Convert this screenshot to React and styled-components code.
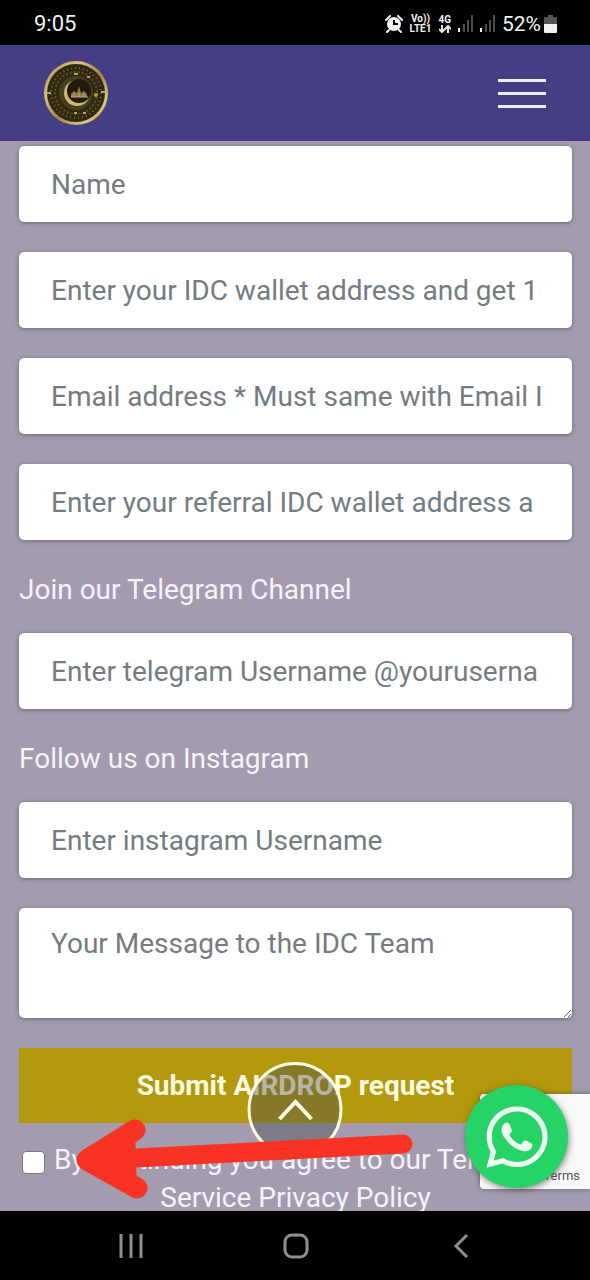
import React from 'react';
import styled, { createGlobalStyle } from 'styled-components';
import { FaWhatsapp } from 'react-icons/fa';

const App = () => {
    return (
        <>
            <GlobalStyle />
            <StScreen>
                <StStatusBar>
                    <StClock>9:05</StClock>
                    <StStatusIcons>
                        <AlarmIcon />
                        <StTiny>
                            <span>Vo))</span>
                            <span>LTE1</span>
                        </StTiny>
                        <StTiny>
                            <span>4G</span>
                            <DataArrows />
                        </StTiny>
                        <SignalIcon />
                        <SignalIcon />
                        <StBattery>
                            52%
                            <BatteryIcon />
                        </StBattery>
                    </StStatusIcons>
                </StStatusBar>

                <StHeader>
                    <CoinLogo />
                    <StMenuButton type='button' aria-label='Menu'>
                        <span />
                        <span />
                        <span />
                    </StMenuButton>
                </StHeader>

                <StMain>
                    <StForm>
                        <StInput type='text' aria-label='Name' placeholder='Name' />
                        <StInput type='text' aria-label='IDC wallet address' placeholder='Enter your IDC wallet address and get 1' />
                        <StInput type='email' aria-label='Email address' placeholder='Email address * Must same with Email I' />
                        <StInput type='text' aria-label='Referral wallet address' placeholder='Enter your referral IDC wallet address a' />
                        <StField>
                            <label htmlFor='telegram'>Join our Telegram Channel</label>
                            <StInput id='telegram' type='text' placeholder='Enter telegram Username @youruserna' />
                        </StField>
                        <StField>
                            <label htmlFor='instagram'>Follow us on Instagram</label>
                            <StInput id='instagram' type='text' placeholder='Enter instagram Username' />
                        </StField>
                        <StTextarea aria-label='Message' placeholder='Your Message to the IDC Team' />
                        <StSubmit type='submit'>Submit AIRDROP request</StSubmit>
                    </StForm>
                    <StTerms>
                        <StAgree>
                            <StCheckbox id='agree' type='checkbox' />
                            <label htmlFor='agree'>By continuing you agree to our Terms of</label>
                        </StAgree>
                        <p>
                            <a href='#terms'>Service</a> <a href='#privacy'>Privacy Policy</a>
                        </p>
                    </StTerms>

                    <StScrollTop type='button' aria-label='Back to top'>
                        <svg width='36' height='22' viewBox='0 0 36 22' fill='none' stroke='#fffbe0' strokeWidth='4'>
                            <path d='M2 20 L18 3 L34 20' />
                        </svg>
                    </StScrollTop>
                    <StRecaptcha>
                        <a href='#recaptcha'>Terms</a>
                    </StRecaptcha>
                    <StWhatsapp href='#whatsapp' aria-label='WhatsApp'>
                        <FaWhatsapp size={70} />
                    </StWhatsapp>
                    <StArrow viewBox='0 0 340 84' aria-hidden='true'>
                        <path d='M60 15 L12 45 L62 73' fill='#f93324' stroke='#f93324' strokeWidth='21' strokeLinecap='round' strokeLinejoin='round' />
                        <path d='M22 45 L328 29' stroke='#f93324' strokeWidth='19' strokeLinecap='round' />
                    </StArrow>
                </StMain>

                <StNavBar>
                    <button type='button' aria-label='Recent apps'>
                        <svg width='24' height='26' viewBox='0 0 24 26' stroke='#8f8f8f' strokeWidth='3'>
                            <path d='M2 1 V25 M12 1 V25 M22 1 V25' />
                        </svg>
                    </button>
                    <button type='button' aria-label='Home'>
                        <svg width='26' height='26' viewBox='0 0 26 26' fill='none' stroke='#8f8f8f' strokeWidth='3'>
                            <rect x='2' y='2' width='22' height='22' rx='7' />
                        </svg>
                    </button>
                    <button type='button' aria-label='Back'>
                        <svg width='16' height='26' viewBox='0 0 16 26' fill='none' stroke='#8f8f8f' strokeWidth='3'>
                            <path d='M14 2 L3 13 L14 24' />
                        </svg>
                    </button>
                </StNavBar>
            </StScreen>
        </>
    );
};

export default App;

const AlarmIcon = () => (
    <svg width='18' height='18' viewBox='0 0 18 18'>
        <path d='M1 5 L5 1 M17 5 L13 1 M4 15 L2 17 M14 15 L16 17' stroke='#f2f2f2' strokeWidth='2' strokeLinecap='round' />
        <circle cx='9' cy='9' r='7' fill='#f2f2f2' />
        <path d='M9 5 V9 H13' fill='none' stroke='#000' strokeWidth='2' />
    </svg>
);

const DataArrows = () => (
    <svg width='12' height='8' viewBox='0 0 12 8' fill='none' stroke='#e6e6e6' strokeWidth='2'>
        <path d='M3 0 V6 M0 4 L3 7 L6 4 M9 8 V2 M6 4 L9 1 L12 4' />
    </svg>
);

const SignalIcon = () => (
    <svg width='15' height='17' viewBox='0 0 15 17'>
        <rect x='0' y='13' width='2' height='4' fill='#f2f2f2' />
        <path d='M6 17 V9 M10 17 V5 M14 17 V0' stroke='#4c4c4c' strokeWidth='2' />
    </svg>
);

const BatteryIcon = () => (
    <svg width='13' height='18' viewBox='0 0 13 18'>
        <path d='M4 0 H9 V2 H12 Q13 2 13 3 V10 H0 V3 Q0 2 1 2 H4 Z' fill='#555' />
        <path d='M0 9 H13 V17 Q13 18 12 18 H1 Q0 18 0 17 Z' fill='#f2f2f2' />
    </svg>
);

const CoinLogo = () => (
    <svg width='66' height='66' viewBox='0 0 66 66' role='img' aria-label='IDC'>
        <defs>
            <linearGradient id='rim' x1='0' y1='0' x2='1' y2='1'>
                <stop offset='0' stopColor='#b98a3e' />
                <stop offset='0.3' stopColor='#d9c283' />
                <stop offset='0.55' stopColor='#a8853f' />
                <stop offset='0.8' stopColor='#dcc884' />
                <stop offset='1' stopColor='#9c7430' />
            </linearGradient>
        </defs>
        <circle cx='33' cy='33' r='32' fill='url(#rim)' />
        <circle cx='33' cy='33' r='29' fill='#302811' />
        <circle cx='33' cy='33' r='25' fill='none' stroke='#786932' strokeWidth='2' strokeDasharray='1 3' />
        <circle cx='33' cy='33' r='21' fill='none' stroke='#5b5028' strokeWidth='2' strokeDasharray='2 2' />
        <circle cx='33' cy='33' r='17' fill='#473e20' />
        <circle cx='34' cy='33' r='13' fill='#d0b96f' />
        <circle cx='36' cy='31' r='12' fill='#211b0c' />
        <path d='M28 37 V34 L31 31 L34 33 L36 26 L38 33 L41 31 L44 34 V37 Z' fill='#8b7a4c' />
        <path d='M28 37 H45 M31 34 V37 M36 33 V37 M41 34 V37' stroke='#c0ad73' strokeWidth='1' />
        <path d='M31 14 H35 M44 17 H47 M58 32 H62 M4 33 H8 M31 53 H34 M40 53 H43' stroke='#b3a65c' strokeWidth='2' />
        <circle cx='53' cy='35' r='2' fill='#b59c48' />
    </svg>
);

const GlobalStyle = createGlobalStyle`
    * {
    box-sizing: border-box;
    }

    body {
    margin: 0;
    background-color: black;
    }

    body, input, textarea, button {
    font-family: Roboto, 'Liberation Sans', sans-serif;
    }
`;

const StScreen = styled.div`
    display: flex;
    flex-direction: column;
    height: 100vh;
`;

const StStatusBar = styled.div`
    flex: none;
    display: flex;
    justify-content: space-between;
    align-items: center;
    height: 45px;
    padding: 2px 33px 0 34px;
    background-color: black;
    color: #f2f2f2;
`;

const StClock = styled.span`
    font-size: 22px;
`;

const StStatusIcons = styled.div`
    display: flex;
    align-items: center;
    gap: 7px;
`;

const StTiny = styled.div`
    display: flex;
    flex-direction: column;
    align-items: center;
    gap: 1px;
    font-size: 10px;
    line-height: 9px;
    font-weight: bold;
`;

const StBattery = styled.div`
    display: flex;
    align-items: center;
    gap: 3px;
    font-size: 21px;
`;

const StHeader = styled.header`
    flex: none;
    display: flex;
    justify-content: space-between;
    align-items: center;
    height: 96px;
    padding: 0 44px 0 43px;
    background-color: #433f82;
`;

const StMenuButton = styled.button`
    display: flex;
    flex-direction: column;
    gap: 10px;
    width: 48px;
    padding: 0;
    border: none;
    background: none;

    > span {
    height: 3px;
    background-color: #eeeeff;
    }
`;

const StMain = styled.main`
    position: relative;
    flex: 1;
    min-height: 0;
    padding: 5px 18px 0 19px;
    overflow: hidden;
    background-color: #a49bae;
`;

const StForm = styled.form`
    display: flex;
    flex-direction: column;
    gap: 30px;
`;

const StInput = styled.input`
    width: 100%;
    height: 76px;
    padding: 0 30px 0 32px;
    border: none;
    border-radius: 5px;
    outline: none;
    background-color: white;
    box-shadow: 0 1px 4px rgba(60, 50, 70, 0.5);
    color: #495057;
    font-size: 28px;

    &::placeholder {
    color: #747c82;
    opacity: 1;
    }
`;

const StTextarea = styled(StInput).attrs({ as: 'textarea' })`
    display: block;
    height: 110px;
    padding-top: 17px;
    line-height: 38px;
    resize: vertical;
`;

const StField = styled.div`
    display: flex;
    flex-direction: column;
    gap: 23px;
    color: #f6f2fa;
    font-size: 28px;
    line-height: 40px;
`;

const StSubmit = styled.button`
    height: 75px;
    border: none;
    background-color: #b3980c;
    color: #fffbe0;
    font-size: 28px;
    font-weight: bold;
`;

const StTerms = styled.div`
    padding-top: 18px;
    color: #f6f2fa;
    font-size: 28px;
    line-height: 38px;

    > p {
    margin: 0;
    text-align: center;
    }

    a {
    color: inherit;
    text-decoration: none;
    }
`;

const StAgree = styled.div`
    display: flex;
    align-items: center;
    gap: 9px;
    padding-left: 3px;
    white-space: nowrap;
`;

const StCheckbox = styled.input`
    appearance: none;
    width: 23px;
    height: 23px;
    margin: 4px 0 0;
    border: 1px solid #767676;
    border-radius: 4px;
    background-color: white;

    &:checked {
    background-color: #433f82;
    }
`;

const StScrollTop = styled.button`
    position: absolute;
    left: 50%;
    bottom: 54px;
    transform: translateX(-50%);
    display: flex;
    justify-content: center;
    align-items: center;
    width: 95px;
    height: 95px;
    border: 3px solid #fffbe0;
    border-radius: 50%;
    background-color: rgba(70, 75, 80, 0.4);
`;

const StRecaptcha = styled.div`
    position: absolute;
    right: 0;
    bottom: 22px;
    display: flex;
    justify-content: flex-end;
    align-items: flex-end;
    width: 110px;
    height: 95px;
    padding: 0 10px 6px;
    border-radius: 4px 0 0 4px;
    background-color: #f9f9f9;
    box-shadow: 0 0 5px rgba(60, 60, 60, 0.6);
    font-size: 13px;

    > a {
    color: #555555;
    text-decoration: none;
    }
`;

const StWhatsapp = styled.a`
    position: absolute;
    right: 22px;
    bottom: 23px;
    display: flex;
    justify-content: center;
    align-items: center;
    width: 103px;
    height: 103px;
    border-radius: 50%;
    background-color: #25d366;
    box-shadow: 1px 2px 6px rgba(60, 60, 60, 0.6);
    color: #effff4;
`;

const StArrow = styled.svg`
    position: absolute;
    left: 75px;
    bottom: 12px;
    width: 340px;
    height: 84px;
    pointer-events: none;
`;

const StNavBar = styled.nav`
    flex: none;
    display: flex;
    justify-content: space-between;
    align-items: center;
    height: 69px;
    padding: 0 115px 0 117px;
    background-color: black;

    > button {
    display: flex;
    justify-content: center;
    width: 28px;
    padding: 0;
    border: none;
    background: none;
    }
`;
